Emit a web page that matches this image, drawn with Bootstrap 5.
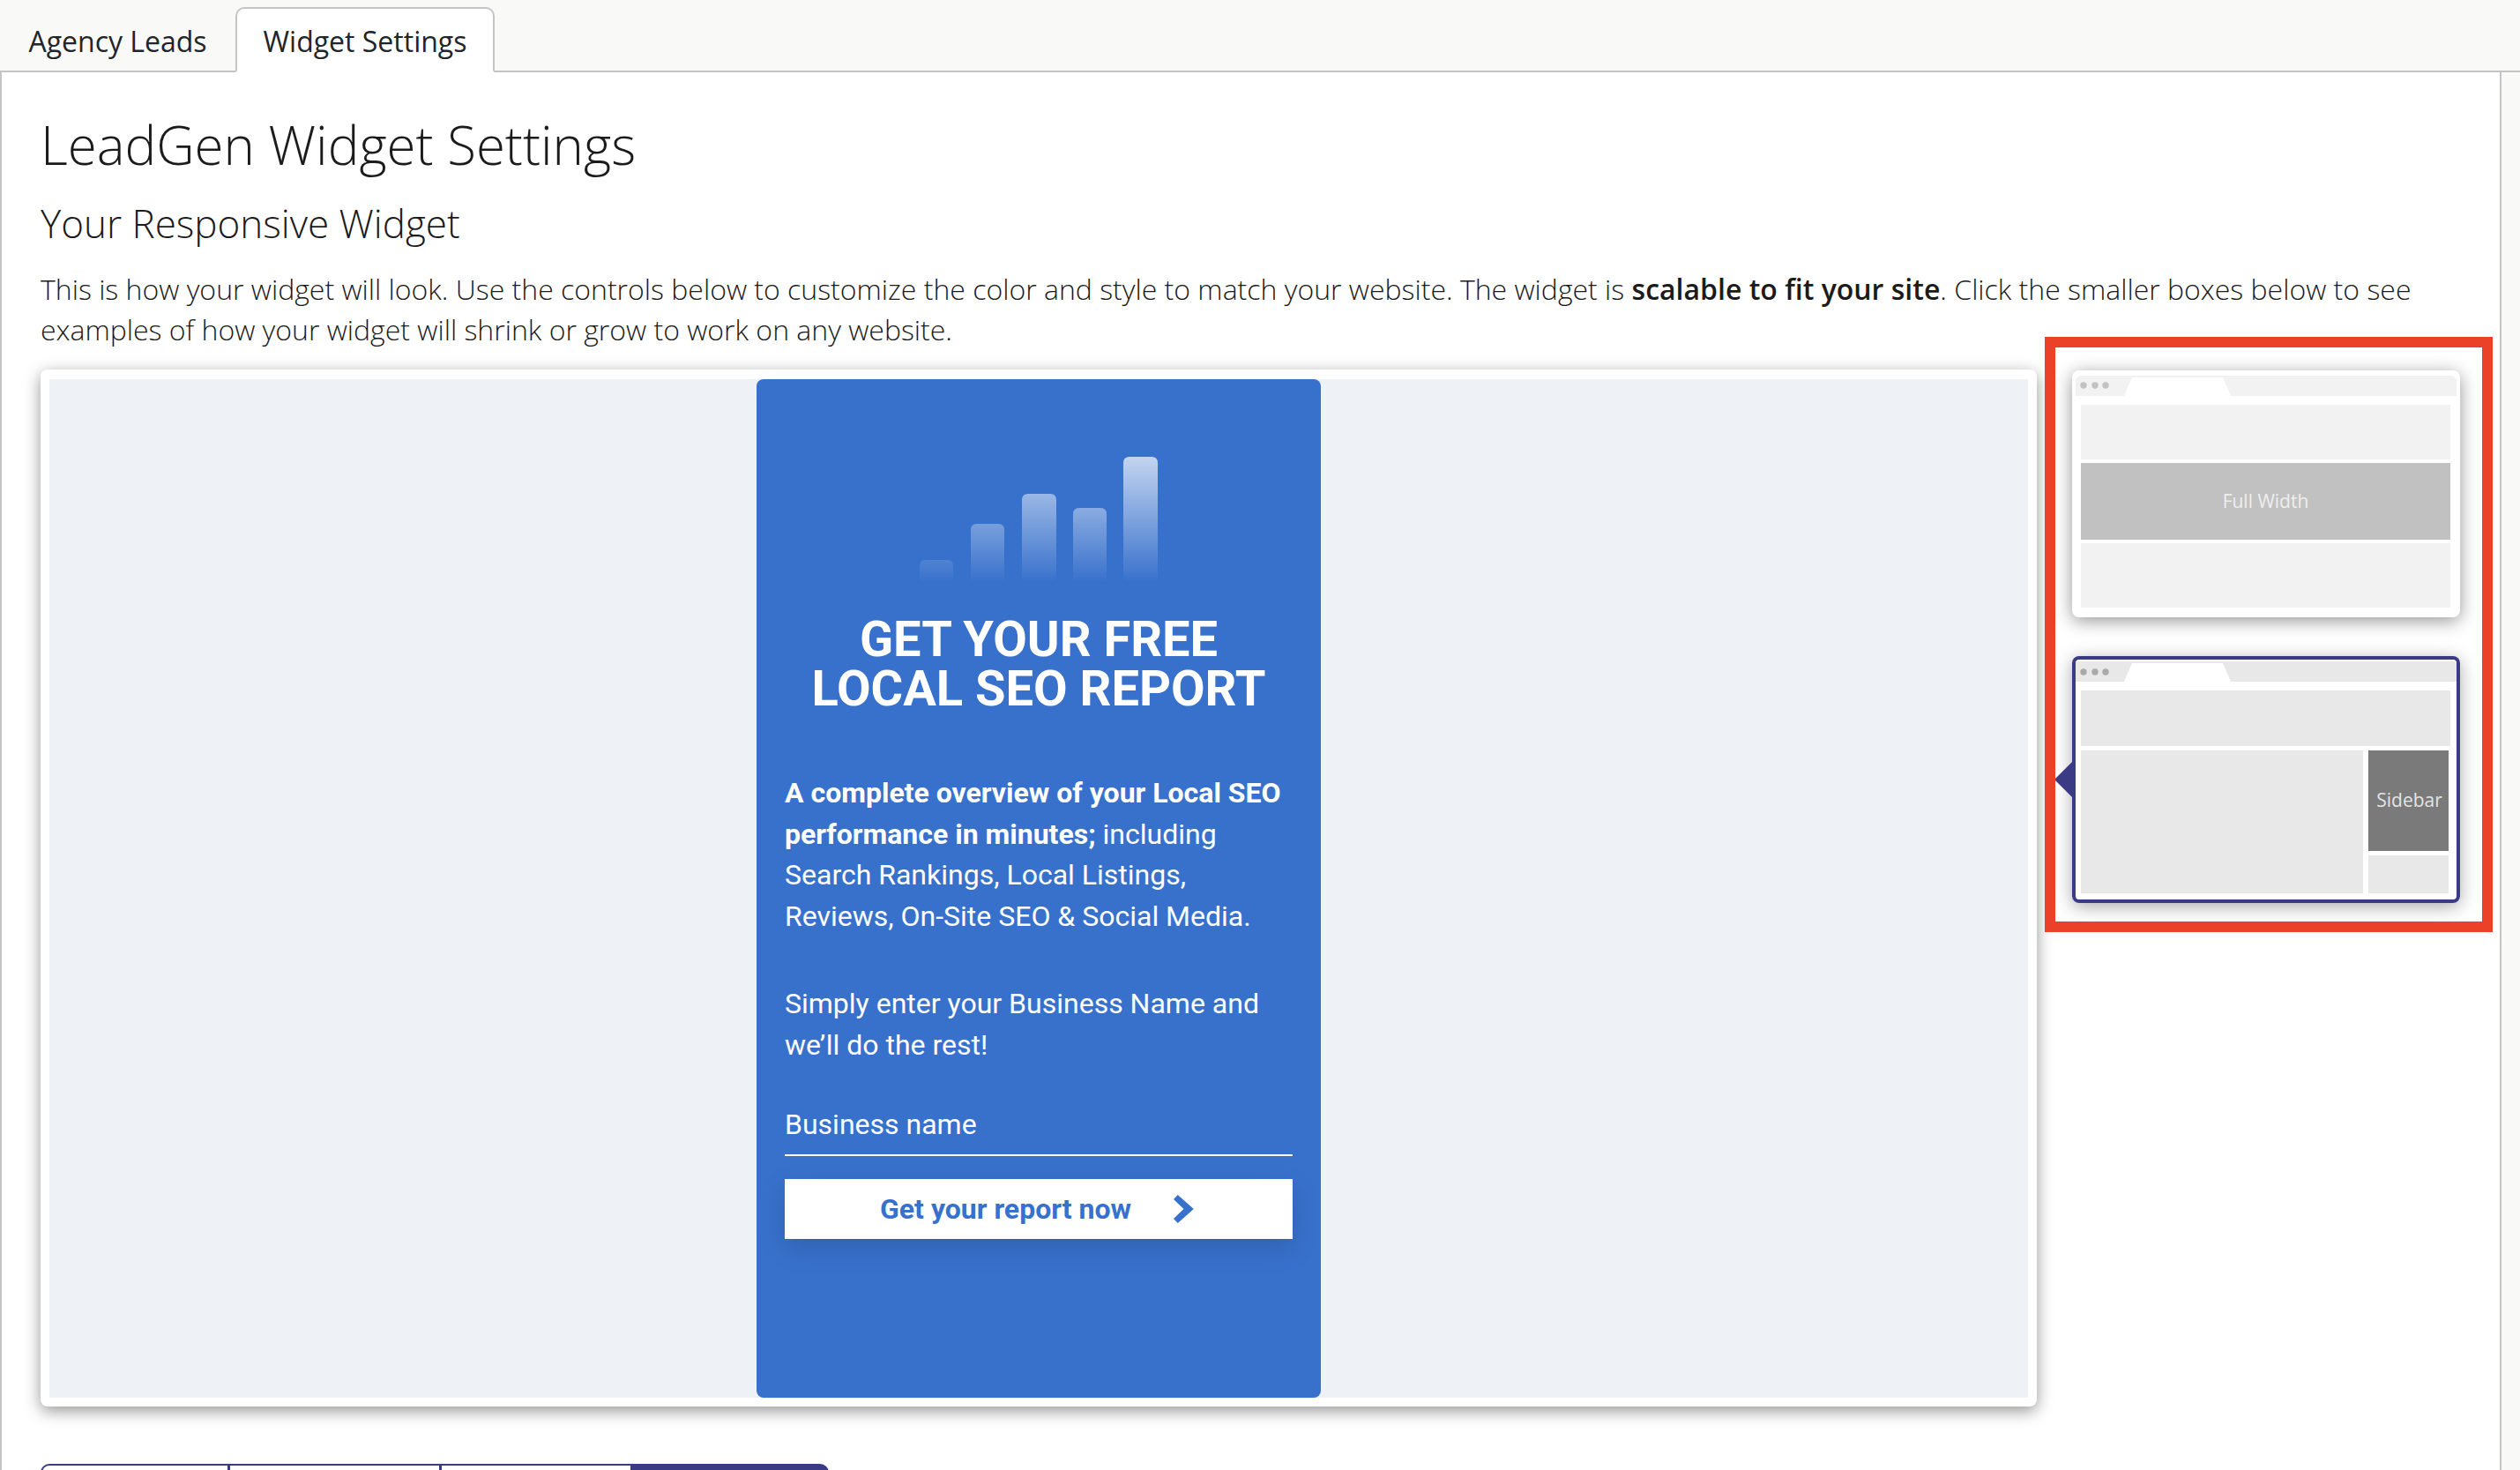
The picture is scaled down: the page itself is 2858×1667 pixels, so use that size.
<!DOCTYPE html>
<html lang="en">
<head>
<meta charset="utf-8">
<title>LeadGen Widget Settings</title>
<link rel="stylesheet" href="https://cdn.jsdelivr.net/npm/bootstrap@5.3.0/dist/css/bootstrap.min.css">
<style>
html,body{height:1667px;overflow:hidden}
body{background:#f9f9f7;font-family:"Open Sans",sans-serif;color:#1b1b1b}
.tab-strip{height:82px;padding-top:8px;border-bottom:2px solid #c4c4c4;--bs-nav-tabs-border-width:0}
.tab-strip .nav-link{font-size:32px;line-height:44px;white-space:nowrap;color:#212529;padding:15px 0 13px;height:74px;width:294px;text-align:center;border:2px solid transparent;border-radius:10px 10px 0 0;margin:0}
.tab-strip .nav-item:first-child .nav-link{width:267px}
.tab-strip .nav-link.active{background:#fff;border-color:#c4c4c4 #c4c4c4 #fff;color:#212529;margin-bottom:-2px}
.pane-box{background:#fff;border:solid #c4c4c4;border-width:0 2px;margin-right:21px;height:1585px;padding:0 0 0 44px;overflow:hidden;position:relative}
.title-main{font-weight:300;font-size:60px;line-height:88px;margin:38px 0 0}
.title-sub{font-weight:300;font-size:44px;line-height:60px;margin:0;padding-top:15px}
.intro{font-weight:300;font-size:32px;line-height:46px;margin:22px 0 0;width:2760px}
.intro b{font-weight:600}
.stage-row{gap:40px;margin-top:19px}
.stage{width:2264px;height:1176px;margin-top:3px;background:#fff;border-radius:8px;padding:11px 10px 10px;box-shadow:0 5px 18px rgba(0,0,0,.42)}
.stage-fill{background:#eef1f6;height:100%}
.lead-card{width:640px;height:100%;background:#3871cc;border-radius:8px;color:#fff;font-family:Roboto,sans-serif;padding:0 32px}
.bars{width:270px;height:142px;margin:88px auto 0;display:block}
.lead-title{font-family:Roboto,sans-serif;font-weight:700;font-size:56px;line-height:56px;text-align:center;text-transform:uppercase;margin:37px -10px 0}
.lead-copy{font-size:32px;line-height:46.5px;margin:67px 0 0}
.lead-copy b{font-weight:700}
.lead-copy+.lead-copy{margin-top:53px}
.lead-input.form-control{background:transparent;border:0;border-bottom:2px solid #fff;border-radius:0;color:#fff;font-size:32px;line-height:44px;padding:0 0 5px;height:66px;margin-top:37px;box-shadow:none}
.lead-input::placeholder{color:#fff;opacity:1}
.lead-btn.btn{--bs-btn-border-width:0;width:100%;height:68px;margin-top:26px;background:#fff;color:#3871cc;border-radius:0;font-size:32px;font-weight:700;box-shadow:0 10px 30px rgba(0,0,0,.15);padding:0 4px 0 0;gap:47px}
.lead-btn svg{width:24px;height:32px}
.thumb-col{width:440px;gap:44px;margin-top:4px}
.thumb{width:440px;height:280px;background:#fff;border-radius:8px;box-shadow:0 4px 20px rgba(0,0,0,.42);padding:6px 4px 0;position:relative}
.thumb-sel{box-shadow:0 4px 20px rgba(0,0,0,.34),inset 0 0 0 4px #3a3a85}
.thumb-head{height:23px;background:#f2f2f2;border-radius:6px 6px 0 0;position:relative;margin-bottom:10px}
.thumb-sel .thumb-head{background:#e8e8e8;border-radius:0}
.thumb-head svg{position:absolute;left:0;top:0;width:432px;height:23px;display:block}
.t-block{background:#f2f2f2;margin:0 7px 0 6px}
.thumb-sel .t-block,.thumb-sel .t-cell{background:#e8e8e8}
.t-hi{background:#c1c1c1;color:#eee;font-size:21px}
.t-side{background:#7a7a7a!important;color:#e4e4e4;font-size:21px;padding-left:2px}
.t-main{width:320px}
.t-col{width:91px;gap:5px;margin-left:6px}
.t-cell{background:#e8e8e8}
.t-top{height:62px}
.t-band{height:87px;margin-top:4px;margin-bottom:4px}
.t-low{height:73px}
.t-top2{height:63px}
.t-split{margin:5px 9px 0 6px;height:162px}
.t-sideh{height:114px}
.pointer{position:absolute;left:-20px;top:119px;width:21px;height:42px;display:block}
.segs{margin-top:65px;height:80px}
.segs .btn{--bs-btn-border-radius:10px;height:80px;border:2px solid #3a3a85;background:#fff;padding:0;flex:none}
.segs .btn:nth-child(1){width:214px}
.segs .btn:nth-child(2){width:241px}
.segs .btn:nth-child(3){width:218px}
.segs .btn:nth-child(4){width:224px;background:#3a3a85}
.notice{position:absolute;left:2317px;top:300px;width:508px;height:675px;border:12px solid #ea4128;pointer-events:none}
</style>
</head>
<body>
<ul class="nav nav-tabs tab-strip">
  <li class="nav-item"><a class="nav-link" href="#">Agency Leads</a></li>
  <li class="nav-item"><a class="nav-link active" href="#">Widget Settings</a></li>
</ul>
<div class="pane-box">
  <h1 class="title-main">LeadGen Widget Settings</h1>
  <h2 class="title-sub">Your Responsive Widget</h2>
  <p class="intro">This is how your widget will look. Use the controls below to customize the color and style to match your website. The widget is <b>scalable to fit your site</b>. Click the smaller boxes below to see examples of how your widget will shrink or grow to work on any website.</p>
  <div class="d-flex stage-row">
    <div class="stage flex-shrink-0">
      <div class="stage-fill d-flex justify-content-center">
        <div class="lead-card">
          <svg class="bars" viewBox="0 0 270 142" aria-hidden="true">
            <defs><linearGradient id="barfade" gradientUnits="userSpaceOnUse" x1="0" y1="0" x2="0" y2="142"><stop offset="0" stop-color="#fff" stop-opacity=".7"/><stop offset="1" stop-color="#fff" stop-opacity="0"/></linearGradient></defs>
            <path fill="url(#barfade)" d="M0 142V124q0-7 7-7h24q7 0 7 7v18z"/>
            <path fill="url(#barfade)" d="M58 142V83q0-7 7-7h24q7 0 7 7v59z"/>
            <path fill="url(#barfade)" d="M116 142V49q0-7 7-7h25q7 0 7 7v93z"/>
            <path fill="url(#barfade)" d="M174 142V65q0-7 7-7h24q7 0 7 7v77z"/>
            <path fill="url(#barfade)" d="M231 142V7q0-7 7-7h25q7 0 7 7v135z"/>
          </svg>
          <h3 class="lead-title">Get your free<br>local SEO report</h3>
          <p class="lead-copy"><b>A complete overview of your Local SEO performance in minutes;</b> including Search Rankings, Local Listings, Reviews, On-Site SEO &amp; Social Media.</p>
          <p class="lead-copy">Simply enter your Business Name and we’ll do the rest!</p>
          <input class="form-control lead-input" type="text" placeholder="Business name">
          <button class="btn lead-btn d-flex align-items-center justify-content-center" type="button">Get your report now
            <svg viewBox="0 0 24 32" aria-hidden="true"><path fill="#3871cc" d="M5 0l19 16L5 32 0 27l12-11L0 5z" transform="translate(1 0) scale(.95 1)"/></svg>
          </button>
        </div>
      </div>
    </div>
    <div class="thumb-col d-flex flex-column flex-shrink-0">
      <div class="thumb">
        <div class="thumb-head"><svg viewBox="0 0 432 23" aria-hidden="true"><path fill="#fff" d="M55 23L64 2H167L176 23z"/><circle cx="9" cy="11" r="3.7" fill="#c2c2c2"/><circle cx="22" cy="11" r="3.7" fill="#c2c2c2"/><circle cx="34" cy="11" r="3.7" fill="#c2c2c2"/></svg></div>
        <div class="t-block t-top"></div>
        <div class="t-block t-hi t-band d-flex align-items-center justify-content-center">Full Width</div>
        <div class="t-block t-low"></div>
      </div>
      <div class="thumb thumb-sel">
        <svg class="pointer" viewBox="0 0 21 42" aria-hidden="true"><path fill="#3a3a85" d="M0 21L21 0V42z"/></svg>
        <div class="thumb-head"><svg viewBox="0 0 432 23" aria-hidden="true"><path fill="#fff" d="M55 23L64 2H167L176 23z"/><circle cx="9" cy="12" r="3.7" fill="#a9a9a9"/><circle cx="22" cy="12" r="3.7" fill="#a9a9a9"/><circle cx="34" cy="12" r="3.7" fill="#a9a9a9"/></svg></div>
        <div class="t-block t-top2"></div>
        <div class="d-flex t-split">
          <div class="t-main t-cell"></div>
          <div class="t-col d-flex flex-column">
            <div class="t-side t-sideh d-flex align-items-center justify-content-center">Sidebar</div>
            <div class="t-cell flex-grow-1"></div>
          </div>
        </div>
      </div>
    </div>
  </div>
  <div class="btn-group segs" role="group" aria-label="Widget settings sections">
    <button class="btn" type="button" aria-label="Section 1"></button>
    <button class="btn" type="button" aria-label="Section 2"></button>
    <button class="btn" type="button" aria-label="Section 3"></button>
    <button class="btn" type="button" aria-label="Section 4"></button>
  </div>
  <div class="notice"></div>
</div>
<script src="https://cdn.jsdelivr.net/npm/bootstrap@5.3.0/dist/js/bootstrap.bundle.min.js"></script>
</body>
</html>
